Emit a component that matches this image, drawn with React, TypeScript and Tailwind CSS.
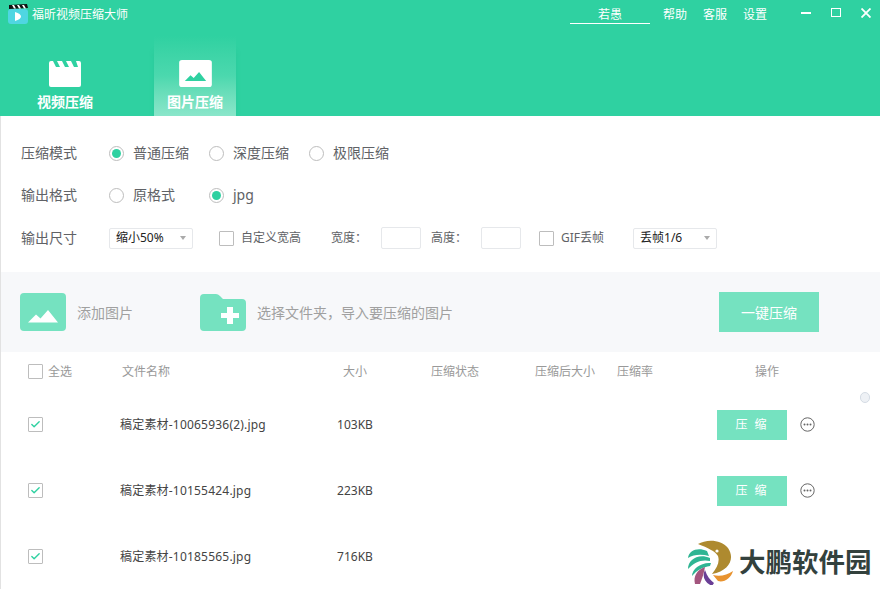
import { Check } from "lucide-react";

const font = { fontFamily: '"Noto Sans", "Noto Sans CJK SC", "Liberation Sans", sans-serif' };

function Radio({ on, label }: { on?: boolean; label: string }) {
  return (
    <div className="flex items-center">
      <span className="flex h-[15px] w-[15px] items-center justify-center rounded-full border border-[#bdbdbd] bg-white">
        {on && <span className="h-[9px] w-[9px] rounded-full bg-[#2fd1a1]" />}
      </span>
      <span className="ml-[9px] text-[14px] leading-[22px] text-[#606266]">{label}</span>
    </div>
  );
}

function Box({ on }: { on?: boolean }) {
  return (
    <span className="flex h-[15px] w-[15px] shrink-0 items-center justify-center rounded-[1px] border border-[#bdbdbd] bg-white">
      {on && <Check className="h-[11px] w-[11px] text-[#2fd1a1]" strokeWidth={3} />}
    </span>
  );
}

function Select({ value, width }: { value: string; width: string }) {
  return (
    <div className={`flex h-[21px] items-center justify-between rounded-[2px] border border-[#e6e8eb] pl-[6px] pr-[6px] text-[12px] text-[#222] ${width}`}>
      <span>{value}</span>
      <span className="h-0 w-0 border-x-[3px] border-t-[4px] border-x-transparent border-t-[#aaa]" />
    </div>
  );
}

function ImageIcon({ className, fg }: { className: string; fg: string }) {
  return (
    <svg viewBox="0 0 46 38" className={className}>
      <rect width="46" height="38" rx="4" fill="currentColor" />
      <path d="M8 29.5 L16 21.5 L20.5 25.5 L28 17 L38 29.5 Z" fill={fg} />
    </svg>
  );
}

function ClapperIcon() {
  return (
    <svg viewBox="0 0 32 28" className="h-[28px] w-[32px]">
      <path
        d="M0 3 Q0 1 2 1 H4 L7 7 H11 L8 1 H13 L16 7 H20 L17 1 H22 L25 7 H29 L27 1 H30 Q32 1 32 3 V25 Q32 27 30 27 H2 Q0 27 0 25 Z"
        fill="#fff"
      />
    </svg>
  );
}

function AppIcon() {
  return (
    <svg viewBox="0 0 20 20" className="h-[20px] w-[20px]">
      <rect x="0" y="5" width="20" height="15" rx="3" fill="#4fd6e2" />
      <path d="M1 1 L19 0 L20 4 L1 5 Z" fill="#111" />
      <path d="M4 1 L6 4.5 H8 L6 1 Z M9 1 L11 4.5 H13 L11 1 Z M14 1 L16 4.5 H18 L16 1 Z" fill="#fff" />
      <path d="M7 8 C11 9 13 11 13 12.5 C13 14 11 16 7 17 Z" fill="#fff" />
    </svg>
  );
}

function MoreIcon() {
  return (
    <svg viewBox="0 0 15 15" className="h-[15px] w-[15px]">
      <circle cx="7.5" cy="7.5" r="6.7" fill="none" stroke="#666" strokeWidth="1" />
      <circle cx="4.5" cy="7.5" r="1" fill="#666" />
      <circle cx="7.5" cy="7.5" r="1" fill="#666" />
      <circle cx="10.5" cy="7.5" r="1" fill="#666" />
    </svg>
  );
}

function Logo() {
  return (
    <svg viewBox="0 0 46 45" className="h-[45px] w-[46px]">
      <path d="M10 4 C18 -1 33 -1 40 8 C47 18 42 31 24 34 C29 28 32 22 30 16 C27 11 20 8 10 4 Z" fill="#ae8a2f" />
      <circle cx="29" cy="11" r="1.6" fill="#fff" />
      <path d="M0 18 C1 10 10 7 19 11 L21 16 C14 14 6 14 0 18 Z" fill="#2fb593" />
      <path d="M0 29 C0 20 10 13 22 18 L22 21 C14 19 6 22 0 29 Z" fill="#2fb593" />
      <path d="M4 36 C4 29 13 22 23 23 L22 26 C15 27 9 30 4 36 Z" fill="#2fb593" />
      <path d="M7 44 C5 36 9 30 17 27 C16 33 14 39 12 44 Z" fill="#a3557e" />
      <path d="M24 46 C16 42 14 36 17 30 C19 36 22 40 26 43 Z" fill="#6a3f96" />
      <path d="M25 35 C32 37 39 35 45 31 C43 38 36 43 30 41 Z" fill="#e8932f" />
    </svg>
  );
}

const rows = [
  { name: "稿定素材-10065936(2).jpg", size: "103KB", action: true },
  { name: "稿定素材-10155424.jpg", size: "223KB", action: true },
  { name: "稿定素材-10185565.jpg", size: "716KB", action: false },
];

const cols = "grid grid-cols-[92px_210px_50px_150px_82px_105px_1fr] items-center";

export default function App() {
  return (
    <div className="relative h-[590px] w-[880px] overflow-hidden bg-white" style={font}>
      {/* header */}
      <div className="h-[116px] overflow-hidden bg-[#2fd1a1] text-white">
        <div className="flex h-[36px] items-start">
          <div className="ml-[8px] mt-[4px]">
            <AppIcon />
          </div>
          <span className="ml-[4px] mt-[6px] text-[12px] leading-[17px]">福昕视频压缩大师</span>
          <div className="ml-auto flex items-start text-[12px] leading-[17px]">
            <span className="mt-[6px] w-[80px] border-b border-white text-center">若愚</span>
            <span className="ml-[13px] mt-[6px]">帮助</span>
            <span className="ml-[16px] mt-[6px]">客服</span>
            <span className="ml-[16px] mt-[6px]">设置</span>
            <span className="ml-[34px] mt-[12px] h-[2px] w-[10px] bg-white" />
            <span className="ml-[20px] mt-[8px] h-[9px] w-[10px] border-[1.5px] border-white" />
            <svg viewBox="0 0 10 10" className="ml-[20px] mr-[9px] mt-[8px] h-[10px] w-[10px]">
              <path d="M0.5 0.5 L9.5 9.5 M9.5 0.5 L0.5 9.5" stroke="#fff" strokeWidth="1.8" />
            </svg>
          </div>
        </div>
        <div className="flex h-[80px] pl-[24px]">
          <div className="flex w-[82px] flex-col items-center pt-[24px]">
            <ClapperIcon />
            <span className="mt-[4px] text-[14px] font-bold leading-[20px]">视频压缩</span>
          </div>
          <div className="ml-[48px] flex w-[82px] flex-col items-center bg-gradient-to-b from-[#2fd1a1] via-[#4bd8ae] to-[#8ae6ca] pt-[24px] shadow-[0_14px_6px_-2px_rgba(20,160,120,0.35)]">
            <ImageIcon className="h-[27px] w-[33px] text-white" fg="#2fd1a1" />
            <span className="mt-[5px] text-[14px] font-bold leading-[20px]">图片压缩</span>
          </div>
        </div>
      </div>

      {/* options */}
      <div className="h-[156px] border-l border-[#e2e2e2] pl-[20px] pt-[26px]">
        <div className="flex h-[22px] items-center">
          <span className="w-[88px] text-[14px] leading-[22px] text-[#606266]">压缩模式</span>
          <div className="flex gap-[20px]">
            <Radio on label="普通压缩" />
            <Radio label="深度压缩" />
            <Radio label="极限压缩" />
          </div>
        </div>
        <div className="mt-[20px] flex h-[22px] items-center">
          <span className="w-[88px] text-[14px] leading-[22px] text-[#606266]">输出格式</span>
          <div className="flex gap-[34px]">
            <Radio label="原格式" />
            <Radio on label="jpg" />
          </div>
        </div>
        <div className="mt-[21px] flex h-[22px] items-center text-[12px] text-[#606266]">
          <span className="w-[88px] text-[14px] leading-[22px]">输出尺寸</span>
          <Select value="缩小50%" width="w-[84px]" />
          <span className="ml-[26px]">
            <Box />
          </span>
          <span className="ml-[7px]">自定义宽高</span>
          <span className="ml-[30px] w-[50px]">宽度：</span>
          <span className="h-[22px] w-[40px] rounded-[2px] border border-[#e6e8eb]" />
          <span className="ml-[10px] w-[50px]">高度：</span>
          <span className="h-[22px] w-[40px] rounded-[2px] border border-[#e6e8eb]" />
          <span className="ml-[18px]">
            <Box />
          </span>
          <span className="ml-[7px] w-[44px] whitespace-nowrap">GIF丢帧</span>
          <span className="ml-[28px]">
            <Select value="丢帧1/6" width="w-[84px]" />
          </span>
        </div>
      </div>

      {/* toolbar */}
      <div className="flex h-[80px] items-center border-l border-[#e2e2e2] bg-[#f7f8fa] pl-[19px] text-[14px] text-[#a0a0a0]">
        <ImageIcon className="h-[38px] w-[46px] text-[#75e2c0]" fg="#fff" />
        <span className="ml-[11px] w-[56px]">添加图片</span>
        <svg viewBox="0 0 46 37" className="ml-[67px] h-[37px] w-[46px]">
          <path d="M0 4 Q0 0 4 0 H16 Q18 0 20 2 L23 5 H42 Q46 5 46 9 V33 Q46 37 42 37 H4 Q0 37 0 33 Z" fill="#75e2c0" />
          <path d="M27 13 H33 V19 H39 V24 H33 V30 H27 V24 H21 V19 H27 Z" fill="#fff" />
        </svg>
        <span className="ml-[11px] w-[462px]">选择文件夹，导入要压缩的图片</span>
        <button className="h-[40px] w-[100px] bg-[#75e2c0] text-[14px] text-white">一键压缩</button>
      </div>

      {/* table */}
      <div className="border-l border-[#e2e2e2] pl-[27px] text-[12px]">
        <div className={`${cols} h-[39px] text-[#999]`}>
          <div className="flex items-center">
            <Box />
            <span className="ml-[5px]">全选</span>
          </div>
          <span className="pl-[2px]">文件名称</span>
          <span className="text-center">大小</span>
          <span className="pl-[51px]">压缩状态</span>
          <span className="pl-[5px]">压缩后大小</span>
          <span className="pl-[5px]">压缩率</span>
          <span className="pl-[38px]">操作</span>
        </div>
        {rows.map((row) => (
          <div key={row.name} className={`${cols} h-[66px] text-[#444]`}>
            <Box on />
            <span className="whitespace-nowrap pt-[2px] tracking-[0.2px]">{row.name}</span>
            <span className="pt-[2px] text-center">{row.size}</span>
            <span />
            <span />
            <span />
            {row.action && (
              <div className="flex items-center">
                <button className="mt-[2px] h-[30px] w-[70px] bg-[#75e2c0] text-[12px] tracking-[2px] text-white">压 缩</button>
                <span className="ml-[13px]">
                  <MoreIcon />
                </span>
              </div>
            )}
          </div>
        ))}
      </div>

      {/* scrollbar thumb */}
      <span className="absolute left-[860px] top-[392px] h-[11px] w-[10px] rounded-full border border-[#d5dce4] bg-[#eef1f5]" />

      {/* watermark */}
      <div className="absolute bottom-0 right-0 flex h-[60px] w-[200px] items-center bg-white pl-[8px] pt-[4px]">
        <Logo />
        <span className="ml-[5px] whitespace-nowrap text-[26.5px] font-bold leading-none text-[#33413d]">大鹏软件园</span>
      </div>
    </div>
  );
}
